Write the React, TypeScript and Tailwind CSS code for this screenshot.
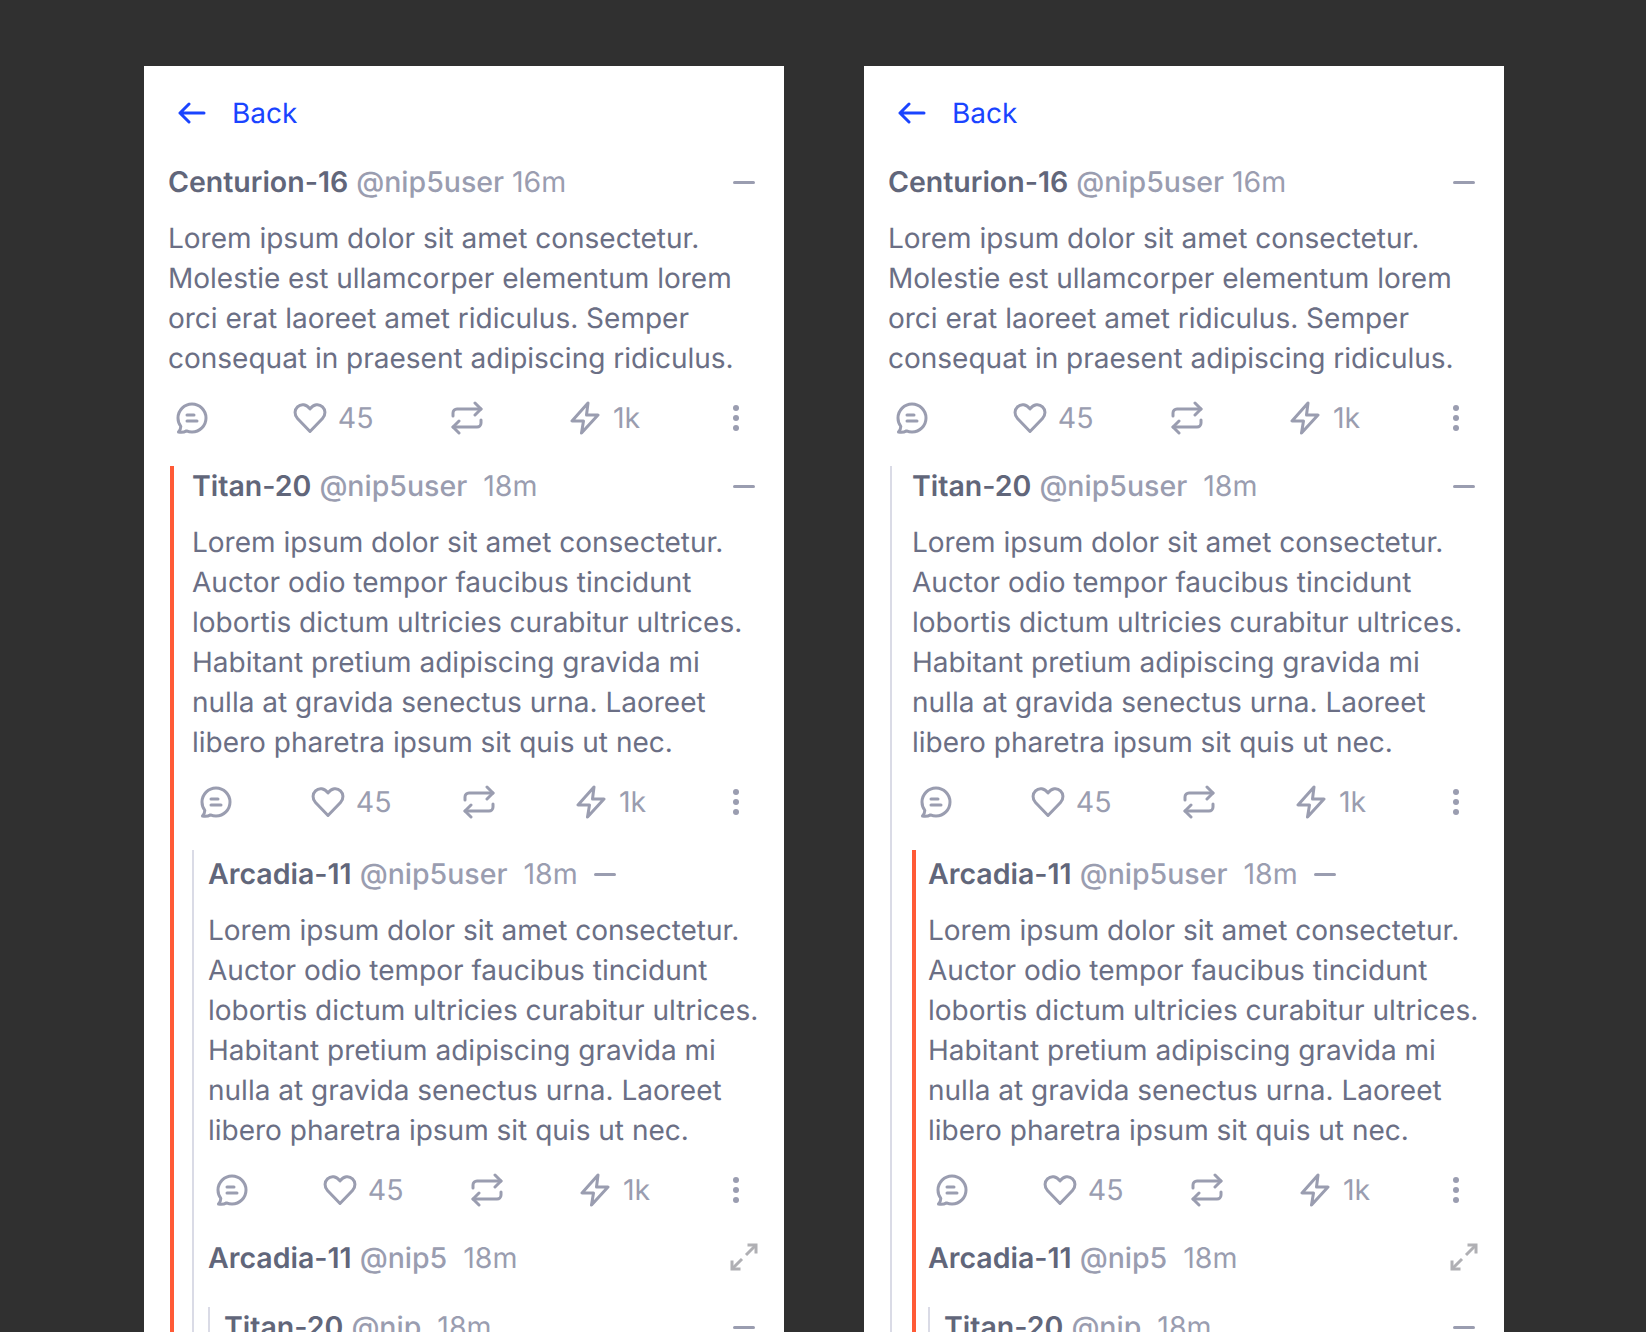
import React from "react";

const L1 = "Lorem ipsum dolor sit amet consectetur. Molestie est ullamcorper elementum lorem orci erat laoreet amet ridiculus. Semper consequat in praesent adipiscing ridiculus.";
const L2 = "Lorem ipsum dolor sit amet consectetur. Auctor odio tempor faucibus tincidunt lobortis dictum ultricies curabitur ultrices. Habitant pretium adipiscing gravida mi nulla at gravida senectus urna. Laoreet libero pharetra ipsum sit quis ut nec.";

const stroke = { fill: "none", stroke: "#9A9DB0", strokeLinecap: "round", strokeLinejoin: "round" } as const;

function Bubble() {
  return (
    <svg width="32" height="32" viewBox="0 0 32 32" {...stroke} strokeWidth={3}>
      <path d="M2.500 30c2 .4 5.600.3 8-1.100 1.700.7 3.500 1.100 5.500 1.100 7.700 0 14-6.300 14-14S23.700 2 16 2 2 8.300 2 16c0 3.200 1 6 2.800 8.300.1 2.100-.9 4.100-2.300 5.700Z" />
      <path d="M11 13h7M11 19h10" />
    </svg>
  );
}
function Heart() {
  return (
    <svg width="34" height="32" viewBox="0 0 34 32" {...stroke} strokeWidth={3}>
      <path d="M17 29.500 4.500 16.500C1 12.700 1.500 7.600 4.500 4.800 8 1.500 13.500 2 17 7c3.500-5 9-5.500 12.500-2.200 3 2.800 3.500 7.900 0 11.700L17 29.500Z" />
    </svg>
  );
}
function Repost() {
  return (
    <svg width="32" height="34" viewBox="0 0 32 34" {...stroke} strokeWidth={3}>
      <path d="M24 2l6 6-6 6" />
      <path d="M2 15v-3a4 4 0 0 1 4-4h24" />
      <path d="M8 32l-6-6 6-6" />
      <path d="M30 19v3a4 4 0 0 1-4 4H2" />
    </svg>
  );
}
function Bolt() {
  return (
    <svg width="30" height="34" viewBox="0 0 30 34" {...stroke} strokeWidth={3}>
      <path d="M18 2 2 20h11.500L11.500 32 28 14H16.500L18 2Z" />
    </svg>
  );
}
function Dots() {
  return (
    <svg width="8" height="28" viewBox="0 0 8 28" fill="#9A9DB0">
      <circle cx="4" cy="4" r="3" />
      <circle cx="4" cy="14" r="3" />
      <circle cx="4" cy="24" r="3" />
    </svg>
  );
}
function Dash() {
  return <span className="block h-[3px] w-[22px] rounded-full bg-[#9A9DB0]" />;
}
function Expand() {
  return (
    <svg width="30" height="30" viewBox="0 0 30 30" fill="none" stroke="#B0B0B4" strokeWidth="3" strokeLinecap="butt" strokeLinejoin="miter">
      <path d="M18.500 3H27v8.500" />
      <path d="M27 3 17 13" />
      <path d="M11.500 27H3v-8.500" />
      <path d="M3 27l10-10" />
    </svg>
  );
}

function IconBox({ children }: { children: React.ReactNode }) {
  return <span className="flex h-12 w-12 items-center justify-center">{children}</span>;
}

function Actions() {
  return (
    <div className="mt-4 flex h-12 items-center justify-between text-[28.5px] leading-10 text-[#9A9DB0]">
      <IconBox><Bubble /></IconBox>
      <span className="flex items-center gap-1"><IconBox><Heart /></IconBox><span>45</span></span>
      <IconBox><Repost /></IconBox>
      <span className="flex items-center gap-1"><IconBox><Bolt /></IconBox><span className="pr-[2px]">1k</span></span>
      <IconBox><Dots /></IconBox>
    </div>
  );
}

function Header({ name, handle, time, wide, children }: { name: string; handle: string; time: string; wide?: boolean; children?: React.ReactNode }) {
  return (
    <div className="flex h-10 items-center text-[28.5px] leading-10">
      <span className="font-semibold text-[#61667A]">{name}</span>
      <span className="ml-2 font-medium text-[#9A9DB0]">{handle}</span>
      <span className={wide ? "ml-4 text-[#9A9DB0]" : "ml-2 text-[#9A9DB0]"}>{time}</span>
      {children}
    </div>
  );
}

function Body({ text }: { text: string }) {
  return <p className="mt-4 text-[28px] leading-10 text-[#6B6F85]">{text}</p>;
}

function Card({ titanRed }: { titanRed: boolean }) {
  return (
    <div className="h-[1266px] w-[640px] shrink-0 overflow-hidden bg-white pl-6 pr-6 pt-[27px] font-['Inter',sans-serif] [text-rendering:geometricPrecision]">
      <div className="flex h-10 items-center text-[28px] leading-10 text-[#1A44FF]">
        <svg width="28" height="24" viewBox="0 0 28 24" fill="none" stroke="#1A44FF" strokeWidth="3" strokeLinecap="round" strokeLinejoin="round" className="ml-[10px]">
          <path d="M26 12H2M11 3l-9 9 9 9" />
        </svg>
        <span className="ml-[26px]">Back</span>
      </div>
      <div className="mt-[29px]">
        <Header name="Centurion-16" handle="@nip5user" time="16m">
          <span className="ml-auto mr-[5px]"><Dash /></span>
        </Header>
        <Body text={L1} />
        <Actions />
      </div>
      <div className={titanRed ? "ml-[2px] mt-6 border-l-4 border-[#FF5A36] pl-[18px]" : "ml-[2px] mt-6 border-l-2 border-[#DADBE6] pl-5"}>
        <Header name="Titan-20" handle="@nip5user" time="18m" wide>
          <span className="ml-auto mr-[5px]"><Dash /></span>
        </Header>
        <Body text={L2} />
        <Actions />
        <div className={titanRed ? "mt-6 border-l-2 border-[#DADBE6] pl-[14px] pt-1" : "mt-6 border-l-4 border-[#FF5A36] pl-3 pt-1"}>
          <Header name="Arcadia-11" handle="@nip5user" time="18m" wide>
            <span className="ml-4"><Dash /></span>
          </Header>
          <Body text={L2} />
          <Actions />
          <div className="mt-6">
            <Header name="Arcadia-11" handle="@nip5" time="18m" wide>
              <span className="ml-auto mb-[2px] mr-[1px]"><Expand /></span>
            </Header>
          </div>
          <div className="mt-8 border-l-2 border-[#DADBE6] pl-[14px]">
            <div className="-mt-[3px]">
              <Header name="Titan-20" handle="@nip" time="18m" wide>
                <span className="ml-auto mr-[5px]"><Dash /></span>
              </Header>
            </div>
          </div>
        </div>
      </div>
    </div>
  );
}

export default function App() {
  return (
    <div className="flex h-[1332px] w-[1646px] items-start gap-20 overflow-hidden bg-[#303030] pl-[144px] pt-[66px]">
      <Card titanRed />
      <Card titanRed={false} />
    </div>
  );
}
